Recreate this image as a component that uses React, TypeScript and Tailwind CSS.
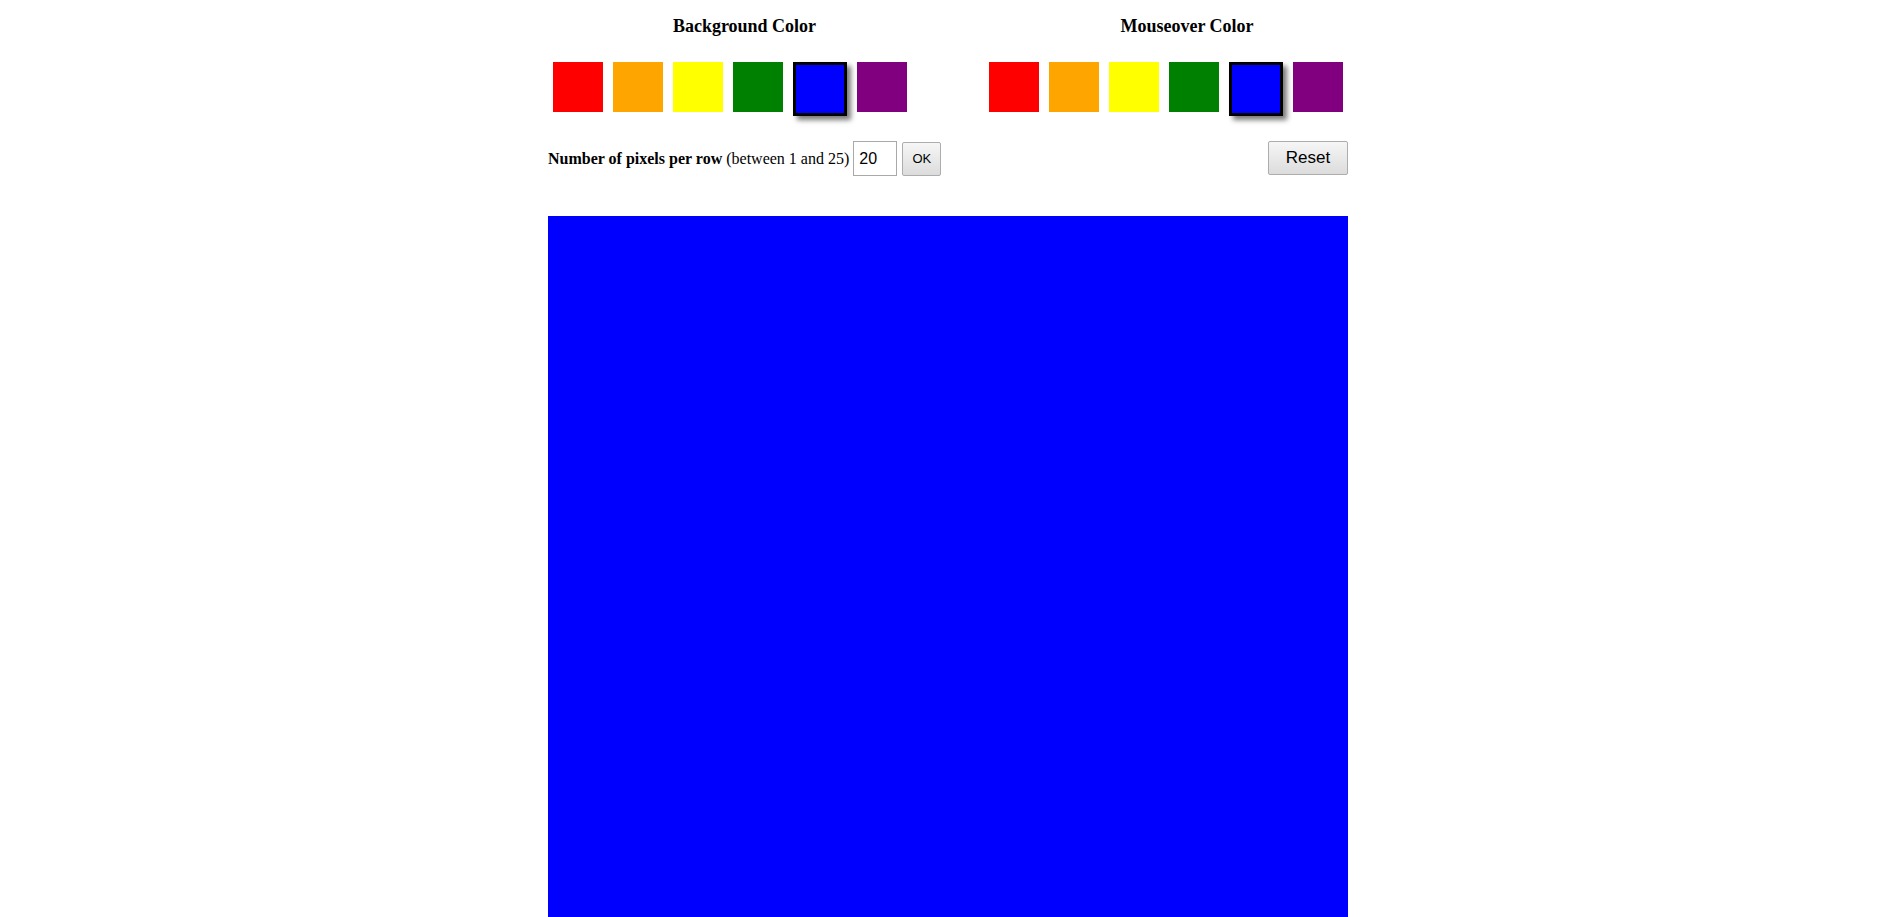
import React from "react";

const COLORS = ["#ff0000", "#ffa500", "#ffff00", "#008000", "#0000ff", "#800080"];

function Swatches({ selected }: { selected: number }) {
  return (
    <div className="flex items-start">
      {COLORS.map((c, i) =>
        i === selected ? (
          <div
            key={c}
            className="m-[5px] w-[54px] h-[54px] border-[3px] border-black shadow-[4px_4px_5px_#7a7a7a]"
            style={{ backgroundColor: c }}
          />
        ) : (
          <div key={c} className="m-[5px] w-[50px] h-[50px]" style={{ backgroundColor: c }} />
        )
      )}
    </div>
  );
}

export default function App() {
  const cells = Array.from({ length: 400 });
  return (
    <div className="flex justify-center pl-[2px] bg-white min-h-screen">
      <div className="w-[800px] pt-[16px] text-black font-['Liberation_Serif','Times_New_Roman',serif]">
        <div className="flex justify-between">
          <div className="w-[393px] text-center text-[18px] leading-[21px] font-bold">Background Color</div>
          <div className="w-[322px] text-center text-[18px] leading-[21px] font-bold">Mouseover Color</div>
        </div>
        <div className="mt-[20px] flex justify-between items-start">
          <Swatches selected={4} />
          <Swatches selected={4} />
        </div>
        <div className="mt-[20px] flex items-center justify-between">
          <div className="flex items-center text-[16px]">
            <span>
              <b>Number of pixels per row</b> (between 1 and 25)
            </span>
            <input
              type="text"
              defaultValue="20"
              className="ml-[4px] w-[44px] h-[35px] border border-[#a9a9a9] pl-[5px] text-[16px] text-black outline-none font-['Liberation_Sans',Arial,sans-serif]"
            />
            <button className="ml-[5px] w-[39px] h-[34px] border border-[#adadad] rounded-[2px] bg-[linear-gradient(#f6f6f6,#dcdcdc)] text-[13px] text-black font-['Liberation_Sans',Arial,sans-serif]">
              OK
            </button>
          </div>
          <button className="self-start w-[80px] h-[34px] border border-[#adadad] rounded-[2px] bg-[linear-gradient(#f6f6f6,#dcdcdc)] text-[17px] text-black font-['Liberation_Sans',Arial,sans-serif]">
            Reset
          </button>
        </div>
        <div className="mt-[40px] grid grid-cols-[repeat(20,40px)] w-[800px]">
          {cells.map((_, i) => (
            <div key={i} className="h-[40px] bg-[#0000ff]" />
          ))}
        </div>
      </div>
    </div>
  );
}
